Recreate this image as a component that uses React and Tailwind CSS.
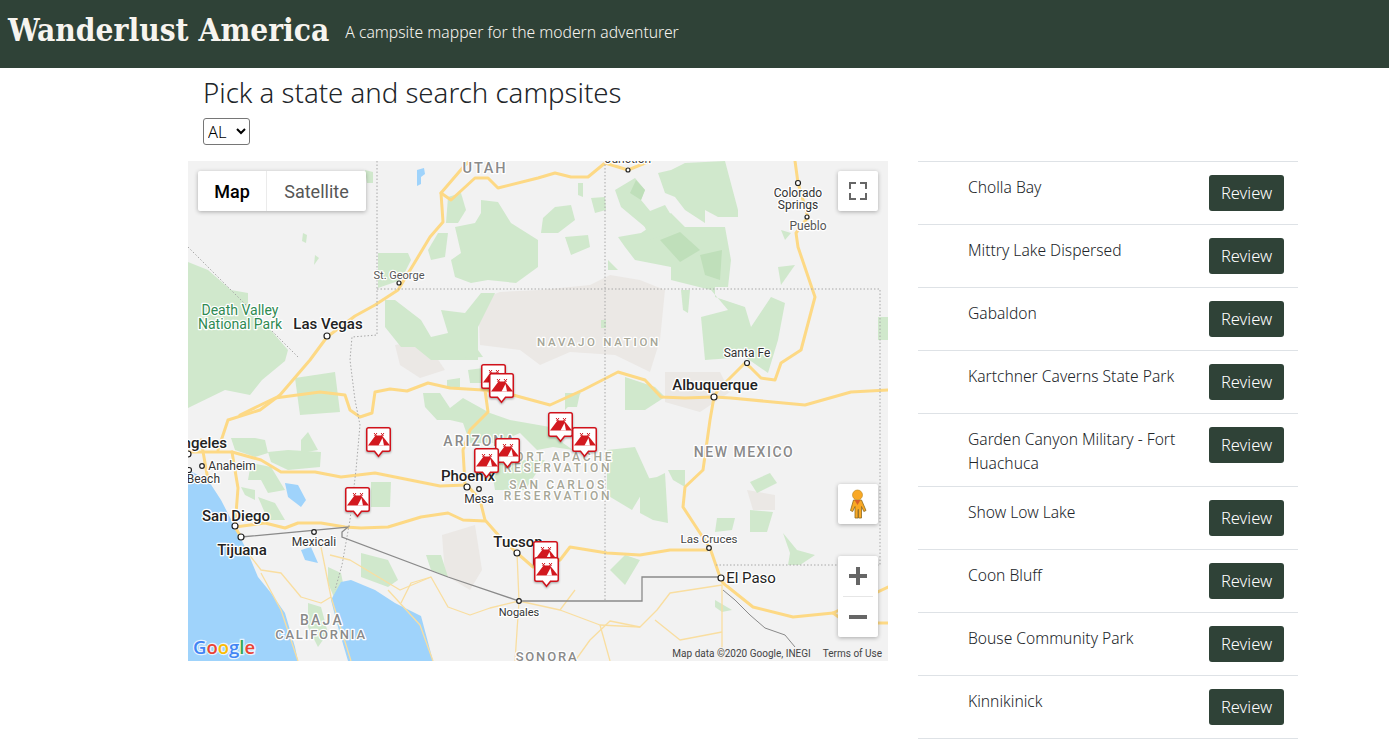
const sites = [
  "Cholla Bay",
  "Mittry Lake Dispersed",
  "Gabaldon",
  "Kartchner Caverns State Park",
  "Garden Canyon Military - Fort Huachuca",
  "Show Low Lake",
  "Coon Bluff",
  "Bouse Community Park",
  "Kinnikinick",
];

const greens = [
  "188,262 208,270 231,290 248,293 248,310 268,327 288,350 285,361 262,380 250,395 225,390 188,408",
  "448,197 461,193 466,210 458,223 446,223",
  "481,200 498,202 511,223 538,240 538,267 516,283 488,280 471,283 455,277 451,260 461,253 455,227 475,223 481,213",
  "438,233 448,233 445,257 431,260 428,250",
  "378,253 408,253 411,260 401,280 378,288",
  "385,300 395,300 421,320 431,337 448,333 441,310 465,313 481,293 495,293 478,327 478,360 431,360 415,347 401,347 385,327",
  "295,378 335,372 340,412 300,415",
  "365,170 373,172 373,183 367,183",
  "303,233 307,235 306,243 302,241",
  "315,255 319,258 314,265",
  "615,190 635,178 645,190 641,200 655,217 645,227 621,207",
  "671,170 685,163 725,161 738,210 738,217 718,217 705,210 705,223 685,210 675,197 665,193 658,173",
  "618,237 641,233 671,213 685,227 725,227 731,260 728,287 715,287 715,297 745,307 751,327 771,297 785,303 778,340 768,373 745,357 705,360 701,317 728,310 711,290 671,280 671,267 635,260 625,247",
  "640,215 665,205 680,230 650,240",
  "555,207 571,205 575,220 558,233 541,233 543,218",
  "565,237 588,235 590,247 571,255",
  "591,198 605,197 606,210 595,213",
  "578,183 583,183 583,197 578,195",
  "608,260 618,270 608,270",
  "681,290 690,290 688,313 683,310",
  "781,230 791,233 785,240",
  "778,267 795,265 781,285",
  "878,317 888,317 888,340 878,340",
  "601,320 606,320 606,328 601,328",
  "625,377 655,387 665,397 645,410 625,410",
  "565,393 581,393 565,410",
  "423,393 440,393 450,408 463,398 490,413 510,420 550,427 563,443 573,450 553,447 537,450 520,433 497,443 470,443 463,423 450,420 437,420 425,407",
  "490,460 545,460 525,490 495,490",
  "607,450 635,447 650,480 632,510 607,495",
  "447,380 460,378 460,387 447,387",
  "468,370 483,368 483,383 470,383",
  "460,350 478,350 483,357 462,358",
  "567,393 580,393 577,407 567,407",
  "231,438 255,438 265,440 268,453 255,457 235,450",
  "301,440 308,432 318,450 301,453",
  "268,452 288,450 321,452 320,467 288,470 271,462",
  "251,463 271,467 285,490 268,493 261,480 248,480",
  "241,487 255,490 255,500 245,495",
  "258,497 275,503 285,520 268,520",
  "371,482 391,482 390,507 371,507",
  "426,555 441,555 448,577 431,570",
  "361,553 388,560 398,580 388,587 361,577",
  "328,567 341,573 345,593 338,607 328,583",
  "308,603 321,607 328,633 318,647 308,627",
  "640,480 657,477 665,473 668,523 653,520 640,513",
  "668,470 685,470 685,487 673,480",
  "750,482 770,473 777,483 757,493",
  "750,510 773,512 767,532 750,532",
  "717,518 735,518 732,530 715,532",
  "783,533 797,550 815,555 800,565 788,565 790,553",
  "715,600 732,610 722,612 715,607",
  "610,570 625,555 640,560 625,585",
];

const darkGreens = [
  "636,180 645,190 641,200 630,193",
  "660,240 680,232 700,250 680,262",
  "700,255 722,250 720,280 705,275",
];

const tans = [
  "478,300 500,292 540,290 590,285 610,275 640,280 665,290 660,340 650,372 615,355 570,352 540,365 520,350 480,345",
  "395,345 425,340 445,370 420,378 400,365",
  "665,372 720,372 730,392 700,412 665,402",
  "442,535 475,525 482,570 470,590 445,575",
  "747,490 775,495 775,510 753,510",
];

const yellowMajor = [
  "327,337 355,316 375,305 398,290 415,262 430,237 443,222 441,193 465,165 470,161",
  "441,193 451,200 475,178 488,178 498,188 538,178 555,173 571,177 588,177 605,163 628,170 650,161",
  "188,452 232,452 261,460 281,472 315,472 341,477 375,473 410,480 440,486 467,485 480,500 485,520 500,537 517,553 533,567 560,560 570,547 607,553 640,555 670,550 707,550",
  "235,527 265,523 285,528 298,523 321,523 345,527 361,528 388,527 421,517 448,513 463,520 485,521",
  "240,415 275,398 320,392 345,395 350,410 360,417 372,413 375,392 390,389 407,391 428,383 450,388 483,390 513,395 550,405 583,390 618,372 645,380 661,397 685,398 714,397 731,398 805,405 851,392 888,390",
  "485,390 488,412 470,430 463,450 465,485",
  "714,397 710,420 703,470 685,487 683,507 700,533 710,548 720,577 723,583 753,607 793,617 833,613 888,587",
  "833,613 847,623 888,623",
  "714,397 718,390 745,363 751,368 761,378 775,380 781,363 801,350 815,297 798,247 796,233 808,217 798,183 795,161",
  "327,337 310,360 280,395 260,410 228,420 218,450",
  "232,452 238,488 235,527 241,537",
  "201,440 208,480",
];

const yellowMinor = [
  "722,585 722,660",
  "722,585 670,593 657,610 640,627 610,621 590,640 575,661",
  "517,553 519,601 515,661",
  "248,553 261,570 281,573 301,597 321,603 331,597",
  "261,573 281,610 298,661",
  "321,547 331,597 351,661",
  "401,603 411,583 431,577 448,607 470,615 490,608 519,601",
  "431,577 400,590 350,560 330,555",
  "519,601 560,610 600,625 640,627",
  "600,625 610,661",
  "560,610 575,590",
  "655,620 680,640 722,632",
  "388,590 420,625 433,661",
];

const markers = [
  [481, 364], [489, 373], [548, 412], [572, 427], [366, 427],
  [345, 487], [495, 438], [474, 448], [533, 541], [534, 557],
];

const dots = [
  [628, 170, 2], [798, 183, 2.5], [807, 217, 2], [399, 283, 2], [327, 336, 3],
  [747, 363, 2.5], [714, 397, 3], [467, 487, 3], [479, 489, 2.3], [188, 454, 3],
  [202, 466, 2.3], [189, 470, 2.5], [235, 526, 3], [241, 537, 3], [314, 532, 2.3],
  [517, 553, 3], [709, 548, 2.3], [721, 578, 3], [519, 601, 2.3],
];

const labels = [
  ["Junction", 628, 163, 12, "#444", 400, "middle"],
  ["Colorado", 798, 197, 12, "#333", 400, "middle"],
  ["Springs", 798, 209, 12, "#333", 400, "middle"],
  ["Pueblo", 808, 230, 12, "#555", 400, "middle"],
  ["St. George", 399, 279, 11, "#555", 400, "middle"],
  ["Death Valley", 240, 315, 14, "#2f8a52", 400, "middle"],
  ["National Park", 240, 329, 14, "#2f8a52", 400, "middle"],
  ["Las Vegas", 328, 329, 15, "#222", 500, "middle"],
  ["Santa Fe", 747, 357, 12, "#333", 400, "middle"],
  ["Albuquerque", 715, 390, 15, "#222", 500, "middle"],
  ["Phoenix", 468, 481, 15, "#222", 500, "middle"],
  ["Mesa", 479, 503, 12, "#333", 400, "middle"],
  ["ngeles", 227, 448, 15, "#222", 500, "end"],
  ["Anaheim", 232, 470, 12, "#333", 400, "middle"],
  ["Beach", 220, 483, 12, "#333", 400, "end"],
  ["San Diego", 236, 521, 15, "#222", 500, "middle"],
  ["Tijuana", 242, 555, 15, "#222", 500, "middle"],
  ["Mexicali", 314, 546, 12, "#333", 400, "middle"],
  ["Tucson", 518, 547, 15, "#222", 500, "middle"],
  ["Las Cruces", 709, 543, 11.5, "#444", 400, "middle"],
  ["El Paso", 751, 583, 15, "#222", 400, "middle"],
  ["Nogales", 519, 616, 11, "#333", 400, "middle"],
];

const regions = [
  ["UTAH", 485, 173, 14.5, "#8a8a8a", 500, 1.8],
  ["NAVAJO NATION", 599, 346, 11.5, "#a6a697", 500, 2.7],
  ["ARIZONA", 480, 446, 14, "#8a8a8a", 500, 2],
  ["FORT APACHE", 560, 461, 12, "#a6a697", 500, 2.8],
  ["RESERVATION", 558, 472, 12, "#a6a697", 500, 2.8],
  ["SAN CARLOS", 558, 489, 12, "#a6a697", 500, 2.6],
  ["RESERVATION", 558, 500, 12, "#a6a697", 500, 2.8],
  ["NEW MEXICO", 744, 457, 14, "#8a8a8a", 500, 1.5],
  ["BAJA", 322, 625, 14, "#8a8a8a", 500, 2.2],
  ["CALIFORNIA", 321, 639, 13, "#8a8a8a", 500, 1.8],
  ["SONORA", 547, 661, 13, "#8a8a8a", 500, 1.8],
];

function Marker({ x, y }) {
  return (
    <g transform={`translate(${x} ${y})`}>
      <path
        d="M2.5 .75h20a1.75 1.75 0 0 1 1.75 1.75v20a1.75 1.75 0 0 1-1.75 1.75h-6l-4 5-4-5h-6A1.75 1.75 0 0 1 .75 22.5v-20A1.75 1.75 0 0 1 2.5 .75z"
        fill="#fff"
        stroke="#d0121b"
        strokeWidth="1.5"
        style={{ filter: "drop-shadow(0 1px 1px rgba(0,0,0,.35))" }}
      />
      <path d="M2 18.5 9.5 8.5h6.5L24 18.5z" fill="#d2191f" />
      <path d="M8 6l2.5 3M11 6 8.5 9M15 6l2.5 3M18 6l-2.5 3" stroke="#d2191f" strokeWidth="1" />
      <path d="M16.5 11 12.5 18.5h5.5z" fill="#fff" />
    </g>
  );
}

function MapArt() {
  return (
    <svg viewBox="188 161 700 500" className="absolute inset-0 block h-full w-full">
      <rect x="188" y="161" width="700" height="500" fill="#f2f2f2" />
      {tans.map((p, i) => <polygon key={i} points={p} fill="#ebe8e5" />)}
      {greens.map((p, i) => <polygon key={i} points={p} fill="#d0e8cc" />)}
      {darkGreens.map((p, i) => <polygon key={i} points={p} fill="#bfdfba" />)}
      <path d="M188 470 208 480 221 500 238 533 248 553 258 577 271 593 285 613 295 647 298 661H188z" fill="#9fd3fb" />
      <path d="M341 582 331 600 338 627 348 661H433L421 616 395 603 375 590 351 580z" fill="#9fd3fb" />
      <path d="M417 170l7-2 1 6-4 3v7l-4 2z" fill="#9fd3fb" />
      <path d="M285 483 298 485 306 500 301 507 288 497z" fill="#9fd3fb" />
      <path d="M301 550 311 547 318 563 305 560z" fill="#9fd3fb" />
      {yellowMinor.map((p, i) => (
        <polyline key={i} points={p} fill="none" stroke="#f9dea0" strokeWidth="1.3" strokeLinejoin="round" />
      ))}
      {yellowMajor.map((p, i) => (
        <polyline key={i} points={p} fill="none" stroke="#fdd985" strokeWidth="3" strokeLinejoin="round" strokeLinecap="round" />
      ))}
      <g fill="none" stroke="#a8a8a8" strokeWidth="1" strokeDasharray="1.5 2">
        <path d="M377 161V335L352 337 350 360 355 400 360 425 356 470 350 520 342 565 335 590" />
        <path d="M188 247 298 357" />
        <path d="M377 289H880V565H716" />
        <path d="M605 161V600" />
      </g>
      <path d="M241 537 348 527 342 532V537L448 577 519 601H642V577H718" fill="none" stroke="#8a8a8a" strokeWidth="1.3" />
      <path d="M723 590 735 600 750 615 765 628 785 635 795 647" fill="none" stroke="#8a8a8a" strokeWidth="1" />
      <g fontFamily="Roboto, sans-serif" textAnchor="middle" style={{ paintOrder: "stroke" }} stroke="#fff" strokeWidth="2.5" strokeLinejoin="round">
        {regions.map(([t, x, y, s, c, w, ls]) => (
          <text key={t + y} x={x} y={y} fontSize={s} fill={c} fontWeight={w} letterSpacing={ls}>{t}</text>
        ))}
        {labels.map(([t, x, y, s, c, w, a]) => (
          <text key={t + x} x={x} y={y} fontSize={s} fill={c} fontWeight={w} textAnchor={a}>{t}</text>
        ))}
      </g>
      {dots.map(([x, y, r], i) => (
        <circle key={i} cx={x} cy={y} r={r} fill="#fff" stroke="#222" strokeWidth="1.2" />
      ))}
      {markers.map(([x, y], i) => <Marker key={i} x={x} y={y} />)}
      <text x="193" y="654" fontFamily="'Open Sans', sans-serif" fontSize="18.5" fontWeight="600" style={{ paintOrder: "stroke" }} stroke="#fff" strokeOpacity=".75" strokeWidth="2.5">
        <tspan fill="#4285f4">G</tspan>
        <tspan fill="#ea4335">o</tspan>
        <tspan fill="#fbbc05">o</tspan>
        <tspan fill="#4285f4">g</tspan>
        <tspan fill="#34a853">l</tspan>
        <tspan fill="#ea4335">e</tspan>
      </text>
    </svg>
  );
}

function Pegman() {
  return (
    <svg viewBox="0 0 40 40" className="h-10 w-10">
      <path d="M15.5 16h8l4.5 10.5-2.2 1-2.3-5V34h-3v-8.5h-.5V34h-3V22.5l-2.3 5-2.2-1z" fill="#f9a825" stroke="#8a6a1f" strokeWidth=".8" strokeLinejoin="round" />
      <circle cx="19.5" cy="11" r="5" fill="#f9a825" stroke="#b9861f" strokeWidth=".6" />
      <path d="M16.5 16h6L19.5 21z" fill="#d9602a" />
    </svg>
  );
}

export default function App() {
  return (
    <div className="min-h-[743px] overflow-hidden bg-white font-['Noto_Sans',sans-serif] text-[#212529]">
      <header className="flex h-[68px] items-center gap-4 bg-[#2f4237] pb-[6px] pl-2 text-[#f7f4ef]">
        <h1 className="font-['DejaVu_Serif_Condensed','DejaVu_Serif',serif] text-[31.4px] leading-none font-bold">Wanderlust America</h1>
        <p className="mt-[3px] text-[15.7px] font-light">A campsite mapper for the modern adventurer</p>
      </header>

      <main className="pl-[188px]">
        <div className="flex h-[93px] flex-col items-start pl-[15px]">
          <h2 className="mt-[5px] text-[27.6px] leading-[38px] font-light">Pick a state and search campsites</h2>
          <select defaultValue="AL" className="mt-[7px] h-[27px] w-[47px] rounded-[3px] border border-[#767676] bg-white text-[16.5px] font-light text-black">
            <option>AL</option>
          </select>
        </div>

        <div className="flex items-start gap-[30px]">
          <div className="relative h-[500px] w-[700px] shrink-0 overflow-hidden">
            <MapArt />

            <div className="absolute top-[10px] left-[10px] flex h-10 rounded-[2px] bg-white font-['Roboto',sans-serif] text-[18px] shadow-[0_1px_4px_rgba(0,0,0,.3)]">
              <div className="flex w-[69px] items-center justify-center border-r border-[#ebebeb] font-medium text-black">Map</div>
              <div className="flex w-[99px] items-center justify-center text-[#565656]">Satellite</div>
            </div>

            <div className="absolute top-[10px] right-[10px] flex h-10 w-10 items-center justify-center rounded-[2px] bg-white shadow-[0_1px_4px_rgba(0,0,0,.3)]">
              <svg viewBox="0 0 18 18" className="h-[18px] w-[18px]" fill="none" stroke="#666" strokeWidth="2">
                <path d="M1 7V1h6M11 1h6v6M17 11v6h-6M7 17H1v-6" />
              </svg>
            </div>

            <div className="absolute top-[323px] right-[10px] h-10 w-10 rounded-[2px] bg-white shadow-[0_1px_4px_rgba(0,0,0,.3)]">
              <Pegman />
            </div>

            <div className="absolute top-[395px] right-[10px] flex h-[81px] w-10 flex-col items-center rounded-[2px] bg-white shadow-[0_1px_4px_rgba(0,0,0,.3)]">
              <div className="flex h-10 items-center justify-center">
                <svg viewBox="0 0 18 18" className="h-[18px] w-[18px]" fill="#666">
                  <path d="M7 0h4v7h7v4h-7v7H7v-7H0V7h7z" />
                </svg>
              </div>
              <div className="h-px w-[30px] bg-[#e6e6e6]" />
              <div className="flex h-10 items-center justify-center">
                <div className="h-1 w-[18px] bg-[#666]" />
              </div>
            </div>

            <div className="absolute right-[6px] bottom-0 flex gap-3 font-['Roboto',sans-serif] text-[10px] leading-[14px] text-[#444]">
              <span className="bg-[#f2f2f2]/70">Map data ©2020 Google, INEGI</span>
              <span className="bg-[#f2f2f2]/70">Terms of Use</span>
            </div>
          </div>

          <ul className="w-[380px] shrink-0 border-b border-[#dee2e6] text-[15.6px] leading-6 font-light">
            {sites.map((name) => (
              <li key={name} className="flex items-start border-t border-[#dee2e6] pt-[13px] pr-[14px] pb-[11.9px] pl-[50px]">
                <span className="w-[225px]">{name}</span>
                <button className="mb-px ml-auto h-9 w-[75px] rounded-[3px] bg-[#2f4237] text-[16.5px] font-light text-white">Review</button>
              </li>
            ))}
          </ul>
        </div>
      </main>
    </div>
  );
}
